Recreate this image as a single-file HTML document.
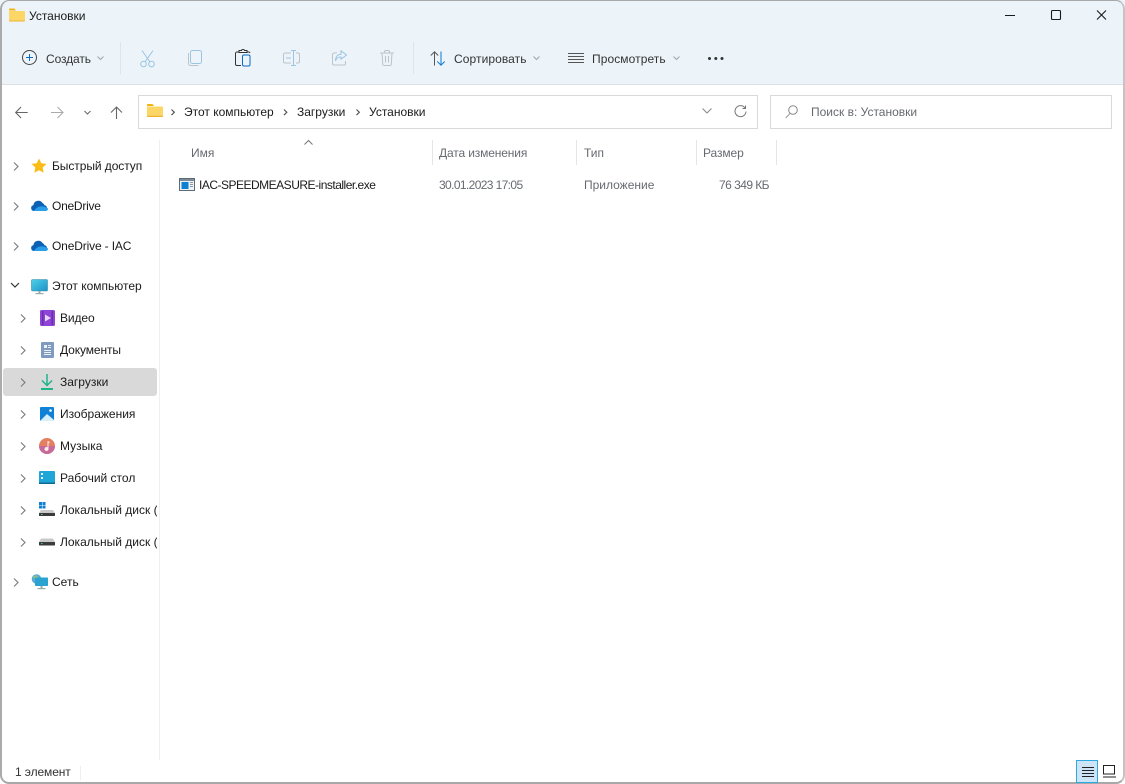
<!DOCTYPE html>
<html lang="ru"><head><meta charset="utf-8"><title>Установки</title>
<style>
html,body{margin:0;padding:0;width:1125px;height:784px;overflow:hidden;background:#fff}
body{font-family:"Liberation Sans","DejaVu Sans",sans-serif;font-size:12px;color:#1a1a1a;position:relative}
.t{position:absolute;white-space:nowrap;line-height:16px}
svg{position:absolute;overflow:visible}
.g{color:#666a70}
#head{position:absolute;left:0;top:0;width:1125px;height:84px;background:#ecf4f9;border-bottom:1px solid #dbe1e5}
.sel{position:absolute;left:3px;top:368px;width:154px;height:28px;background:#d9d9d9;border-radius:3px}
.box{position:absolute;background:#fff;border:1px solid #d9d9d9;top:95px;box-sizing:border-box;height:34px}
.sep{position:absolute;width:1px;background:#dfe6ea}
.hsep{position:absolute;width:1px;background:#e5e5e5;top:140px;height:25px}
</style></head><body>
<div id="head"></div>
<div style="position:absolute;left:0;top:0;width:1125px;height:784px;box-sizing:border-box;border:1px solid #a8a8a8;border-left:2px solid #ababab;border-bottom:2px solid #a8a8a8;border-right:2px solid #c4c4c4;border-radius:9px;pointer-events:none;z-index:5"></div>

<!-- Title -->
<svg style="left:9px;top:8px" width="16" height="14" viewBox="0 0 16 14"><path d="M0 1.500a1 1 0 0 1 1-1h4.500l1.500 2H0z" fill="#f5b30f"/><path d="M0 3h15a1 1 0 0 1 1 1v8.500a1 1 0 0 1-1 1H1a1 1 0 0 1-1-1z" fill="#fcd768"/><path d="M0 12.500h16v.2a1 1 0 0 1-1 .8H1a1 1 0 0 1-1-.8z" fill="#eeb430"/></svg>
<div class="t" style="left:29px;top:8px">Установки</div>
<svg style="left:1005px;top:10px" width="110" height="12" fill="none" stroke="#1a1a1a"><path d="M0 5.500h10"/><rect x="46.500" y=".5" width="9" height="9" rx="1" stroke-width="1.100"/><path d="M92 .5l9 9m0-9l-9 9" stroke-width="1.100"/></svg>

<!-- Toolbar -->
<svg style="left:22px;top:50px" width="16" height="16" fill="none"><circle cx="7.500" cy="7.500" r="7" stroke="#444"/><path d="M7.500 4v7M4 7.500h7" stroke="#0a6cc2"/></svg>
<div class="t" style="left:46px;top:51px;color:#333;letter-spacing:-.1px">Создать</div>
<svg style="left:97px;top:56px" width="7" height="5" fill="none" stroke="#a0a4a8"><path d="M.5.500l3 3 3-3"/></svg>
<div class="sep" style="left:120px;top:42px;height:32px"></div>
<svg style="left:140px;top:50px" width="15" height="18" fill="none" stroke="#9cc5e3"><path d="M2 .5l8 11.500M13 .5L5 12"/><circle cx="3.500" cy="14" r="2.800"/><circle cx="11.500" cy="14" r="2.800"/></svg>
<svg style="left:188px;top:50px" width="14" height="16" fill="none"><rect x="2.500" y=".5" width="11" height="13" rx="2" stroke="#9cc5e3"/><path d="M.5 3v10.500a2 2 0 0 0 2 2h8" stroke="#bcc4c9"/></svg>
<svg style="left:235px;top:49px" width="16" height="18" fill="none"><path d="M4 3H2a1.500 1.500 0 0 0-1.500 1.500V15A1.500 1.500 0 0 0 2 16.500h4M12 3h2a1.500 1.500 0 0 1 1 1M4 3.500V1.500h2.500a1.500 1 0 0 1 3 0H12v2z" stroke="#333"/><rect x="7.500" y="6" width="7.500" height="11" rx="1.500" stroke="#0a6cc2" stroke-width="1"/></svg>
<svg style="left:283px;top:50px" width="17" height="17" fill="none"><path d="M8 3H2a1.500 1.500 0 0 0-1.500 1.500v7A1.500 1.500 0 0 0 2 13h6M13 3h2a1.500 1.500 0 0 1 1.500 1.500v7A1.500 1.500 0 0 1 15 13h-2" stroke="#bcc4c9"/><path d="M8 .5h5M10.500.5v15M8 15.500h5M3 8h5" stroke="#9cc5e3"/></svg>
<svg style="left:332px;top:50px" width="15" height="16" fill="none"><path d="M5 3H2A1.500 1.500 0 0 0 .5 4.500v9A1.500 1.500 0 0 0 2 15h10a1.500 1.500 0 0 0 1.500-1.500V11" stroke="#bcc4c9"/><path d="M9 .8L14.500 5 9 9.200V7C6 7 4.500 8 3.500 11c0-4 2-6.500 5.500-6.800z" stroke="#9cc5e3"/></svg>
<svg style="left:380px;top:50px" width="14" height="16" fill="none" stroke="#bcc4c9"><path d="M0 3h14M4.500 3V2a1.500 1.500 0 0 1 1.500-1.500h2A1.500 1.500 0 0 1 9.500 2v1M2 3l.7 11a1.500 1.500 0 0 0 1.500 1.500h5.600a1.500 1.500 0 0 0 1.500-1.500L12 3M5.500 6v6.500M8.500 6v6.500"/></svg>
<div class="sep" style="left:413px;top:42px;height:32px"></div>
<svg style="left:430px;top:51px" width="16" height="15" fill="none"><path d="M4.500 14.500V.8M.8 4.500L4.500.8l3.700 3.700" stroke="#555"/><path d="M11 .5v13.700M7.300 10.500l3.700 3.700 3.700-3.700" stroke="#0a78d4"/></svg>
<div class="t" style="left:454px;top:51px;color:#333;letter-spacing:.08px">Сортировать</div>
<svg style="left:533px;top:56px" width="7" height="5" fill="none" stroke="#a0a4a8"><path d="M.5.500l3 3 3-3"/></svg>
<svg style="left:568px;top:53px" width="16" height="10" fill="none" stroke="#555"><path d="M0 .5h16M0 3.500h16M0 6.500h16M0 9.500h16"/></svg>
<div class="t" style="left:592px;top:51px;color:#333;letter-spacing:.08px">Просмотреть</div>
<svg style="left:673px;top:56px" width="7" height="5" fill="none" stroke="#a0a4a8"><path d="M.5.500l3 3 3-3"/></svg>
<svg style="left:708px;top:57px" width="16" height="4" fill="#333"><circle cx="1.500" cy="1.500" r="1.500"/><circle cx="7.800" cy="1.500" r="1.500"/><circle cx="14" cy="1.500" r="1.500"/></svg>

<!-- Nav -->
<svg style="left:15px;top:106px" width="110" height="13" fill="none"><path d="M.7 6.500h12M6 1L.7 6.500 6 12" stroke="#666" stroke-width="1.100"/><path d="M36 6.500h12M42.500 1L48 6.500 42.500 12" stroke="#aaa" stroke-width="1.100"/><path d="M69.500 5l3 3 3-3" stroke="#666"/><path d="M101.500 13V1M96 6.500L101.500 1l5.500 5.500" stroke="#666" stroke-width="1.100"/></svg>
<div class="box" style="left:138px;width:620px"></div>
<svg style="left:147px;top:104px" width="16" height="13" viewBox="0 0 16 13"><path d="M0 1a1 1 0 0 1 1-1h4.500L7 2H0z" fill="#f5b30f"/><path d="M0 2.500h15a1 1 0 0 1 1 1v8.500a1 1 0 0 1-1 1H1a1 1 0 0 1-1-1z" fill="#fcd768"/><path d="M0 11.800h16v.2a1 1 0 0 1-1 1H1a1 1 0 0 1-1-1z" fill="#eeb430"/></svg>
<svg style="left:170px;top:109px" width="200" height="7" fill="none" stroke="#555" stroke-width="1.200"><path d="M1.500.5l2.800 2.800-2.800 2.800M114 .5l2.800 2.800-2.800 2.800M186.500.5l2.800 2.800-2.800 2.800"/></svg>
<div class="t" style="left:184px;top:104px">Этот компьютер</div>
<div class="t" style="left:297px;top:104px">Загрузки</div>
<div class="t" style="left:369px;top:104px">Установки</div>
<svg style="left:702px;top:108px" width="10" height="6" fill="none" stroke="#888"><path d="M.5.500l4.500 4.500L9.500.500"/></svg>
<svg style="left:734px;top:105px" width="13" height="13" fill="none" stroke="#777"><path d="M11 3a5.500 5.500 0 1 0 1 3.500M11.500.5V3.500H8.500"/></svg>
<div class="box" style="left:770px;width:342px"></div>
<svg style="left:785px;top:105px" width="13" height="14" fill="none" stroke="#888"><circle cx="8" cy="5" r="4.300"/><path d="M5 8.500L.7 13" stroke="#999"/></svg>
<div class="t g" style="left:811px;top:104px">Поиск в: Установки</div>

<!-- Sidebar -->
<div class="sep" style="left:159px;top:140px;height:620px;background:#efefef"></div>
<div class="sel"></div>
<svg style="left:13px;top:162px" width="16" height="430" fill="none" stroke="#808080" stroke-width="1.200"><path d="M1 .5l4 4-4 4M1 40.500l4 4-4 4M1 80.500l4 4-4 4"/><path d="M-2 121l4 4 4-4" stroke="#333"/><path d="M8 152.500l4 4-4 4M8 184.500l4 4-4 4M8 216.500l4 4-4 4M8 248.500l4 4-4 4M8 280.500l4 4-4 4M8 312.500l4 4-4 4M8 344.500l4 4-4 4M8 376.500l4 4-4 4M1 416.500l4 4-4 4"/></svg>

<svg style="left:31px;top:158px" width="16" height="15"><path d="M8 .5l2.300 4.700 5.200.7-3.800 3.600.9 5.200L8 12.300l-4.600 2.400.9-5.200L.5 5.900l5.200-.7z" fill="#fbbc15"/></svg>
<div class="t" style="left:52px;top:158px;letter-spacing:-.07px">Быстрый доступ</div>
<svg style="left:31px;top:200px" width="17" height="11"><path d="M3 11a3 3 0 0 1-.6-5.900A5 5 0 0 1 11.500 3a3.500 3.500 0 0 1 2 2.200A3 3 0 0 1 14 11z" fill="#0b62b5"/><path d="M3 11c1-2 3-4 6-4.500 3-.5 8 1 8 2.500 0 1-1 2-3 2z" fill="#2a9ee8"/></svg>
<div class="t" style="left:52px;top:198px;letter-spacing:-.25px">OneDrive</div>
<svg style="left:31px;top:240px" width="17" height="11"><path d="M3 11a3 3 0 0 1-.6-5.900A5 5 0 0 1 11.500 3a3.500 3.500 0 0 1 2 2.200A3 3 0 0 1 14 11z" fill="#0b62b5"/><path d="M3 11c1-2 3-4 6-4.500 3-.5 8 1 8 2.500 0 1-1 2-3 2z" fill="#2a9ee8"/></svg>
<div class="t" style="left:52px;top:238px;letter-spacing:-.15px">OneDrive - IAC</div>
<svg style="left:31px;top:279px" width="17" height="16"><defs><linearGradient id="m" x1="0" y1="0" x2="1" y2="1"><stop offset="0" stop-color="#4fd0e8"/><stop offset="1" stop-color="#1b93c9"/></linearGradient></defs><rect x=".5" y=".5" width="16" height="11.500" rx="1" fill="url(#m)" stroke="#3d8ba8" stroke-width=".6"/><rect x="7.500" y="12" width="2" height="2" fill="#9aa"/><rect x="4.500" y="14" width="8" height="1.200" fill="#9aa"/></svg>
<div class="t" style="left:52px;top:278px">Этот компьютер</div>

<svg style="left:40px;top:310px" width="15" height="16"><rect width="15" height="16" rx="1.500" fill="#8e44d6"/><path d="M2 1h1.500v14H2zM11.500 1H13v14h-1.500z" fill="#5a2596" opacity=".7"/><path d="M5 4.500l6 3.500-6 3.500z" fill="#e6d6f8"/></svg>
<div class="t" style="left:60px;top:310px;letter-spacing:-.1px">Видео</div>
<svg style="left:41px;top:342px" width="13" height="16"><rect width="13" height="16" rx="1" fill="#7f9cc0"/><path d="M3 3h3v3H3zM7 3h3v1H7zM7 5h3v1H7zM3 8h7v1H3zM3 10h7v1H3zM3 12h7v1H3z" fill="#eef3f9"/></svg>
<div class="t" style="left:60px;top:342px;letter-spacing:-.1px">Документы</div>
<svg style="left:40px;top:374px" width="14" height="16" fill="none" stroke="#22b38c" stroke-width="1.500"><path d="M7 0v11M2 6.500L7 11.500l5-5"/><path d="M1 15h12" stroke-width="2"/></svg>
<div class="t" style="left:60px;top:374px">Загрузки</div>
<svg style="left:40px;top:407px" width="14" height="14"><rect width="14" height="14" rx="1" fill="#0f82d8"/><path d="M0 14l7-7 7 6v1z" fill="#d8f0fb"/><circle cx="10.500" cy="3.500" r="1.300" fill="#fff"/></svg>
<div class="t" style="left:60px;top:406px">Изображения</div>
<svg style="left:39px;top:438px" width="16" height="16"><circle cx="8" cy="8" r="8" fill="#e47f62"/><path d="M0 8a8 8 0 0 0 16 0z" fill="#c66a9a"/><path d="M8.500 3l2 .8v1.500l-1-.4V11a2 2 0 1 1-1-1.700z" fill="#fdeee6"/></svg>
<div class="t" style="left:60px;top:438px">Музыка</div>
<svg style="left:39px;top:471px" width="16" height="13"><rect width="16" height="13" rx="1" fill="#1fa5d6"/><rect x="2" y="2" width="2" height="2" fill="#dff"/><rect x="2" y="6" width="2" height="2" fill="#dff"/><rect y="11.500" width="16" height="1.500" fill="#0b6a94"/></svg>
<div class="t" style="left:60px;top:470px">Рабочий стол</div>
<svg style="left:39px;top:502px" width="16" height="14"><path d="M0 0h3v3H0zM3.500 0h3v3h-3zM0 3.500h3v3H0zM3.500 3.500h3v3h-3z" fill="#0f7fd2"/><path d="M2 8h12l2 3H0z" fill="#c9c9c9"/><rect y="11" width="16" height="3" rx=".5" fill="#3b3b3b"/><rect x="2" y="12" width="1.500" height="1" fill="#3fd07f"/></svg>
<div class="t" style="left:60px;top:502px;width:97px;overflow:hidden">Локальный диск (C:)</div>
<svg style="left:39px;top:534px" width="16" height="14"><path d="M2 4.500h12l2 3.500H0z" fill="#c9c9c9"/><rect y="8" width="16" height="3.500" rx=".5" fill="#3b3b3b"/><rect x="2" y="9" width="1.500" height="1" fill="#3fd07f"/></svg>
<div class="t" style="left:60px;top:534px;width:97px;overflow:hidden">Локальный диск (D:)</div>
<svg style="left:31px;top:574px" width="17" height="16"><circle cx="5.500" cy="5" r="4.800" fill="#5aa7d8"/><path d="M2 3l3-2 2 2-2 3z" fill="#88c878"/><rect x="4" y="3.500" width="13" height="8.500" rx=".8" fill="#2aa3d0"/><rect x="9.500" y="12" width="2" height="2" fill="#9aa"/><rect x="6.500" y="14" width="8" height="1.200" fill="#9aa"/></svg>
<div class="t" style="left:52px;top:574px">Сеть</div>

<!-- Columns -->
<svg style="left:304px;top:140px" width="10" height="6" fill="none" stroke="#777"><path d="M.5 4.500l4-4 4 4"/></svg>
<div class="t g" style="left:191px;top:145px">Имя</div>
<div class="hsep" style="left:432px"></div>
<div class="t g" style="left:439px;top:145px;letter-spacing:-.14px">Дата изменения</div>
<div class="hsep" style="left:576px"></div>
<div class="t g" style="left:584px;top:145px">Тип</div>
<div class="hsep" style="left:696px"></div>
<div class="t g" style="left:703px;top:145px;letter-spacing:-.1px">Размер</div>
<div class="hsep" style="left:776px"></div>

<svg style="left:179px;top:178px" width="16" height="13"><rect x=".5" y=".5" width="15" height="12" fill="#eef2f6" stroke="#5b6b7a"/><rect x="1" y="1" width="14" height="2" fill="#7c8a98"/><rect x="2.500" y="4" width="7" height="7" fill="#0f7fd2"/><path d="M11 4.500h3M11 6.500h3M11 8.500h3" stroke="#8a97a5"/></svg>
<div class="t" style="left:199px;top:177px;letter-spacing:-.5px">IAC-SPEEDMEASURE-installer.exe</div>
<div class="t g" style="left:439px;top:177px;letter-spacing:-.62px">30.01.2023 17:05</div>
<div class="t g" style="left:584px;top:177px">Приложение</div>
<div class="t g" style="right:356px;top:177px;letter-spacing:-.55px">76 349 КБ</div>

<!-- Status -->
<div class="t" style="left:15px;top:764px;color:#333;letter-spacing:-.1px">1 элемент</div>
<div class="sep" style="left:80px;top:766px;height:14px;background:#efefef"></div>
<div style="position:absolute;left:1076px;top:760px;width:22px;height:23px;box-sizing:border-box;background:#cce4f5;border:1px solid #2ea8e0;z-index:6"></div>
<svg style="left:1082px;top:767px;z-index:7" width="34" height="11" fill="none" stroke="#222"><path d="M0 .5h12M0 3.500h12M0 6.500h12M0 9.500h12"/><path d="M21.500-1.500h11v8.500h-11zM21 10h13"/></svg>
</body></html>
